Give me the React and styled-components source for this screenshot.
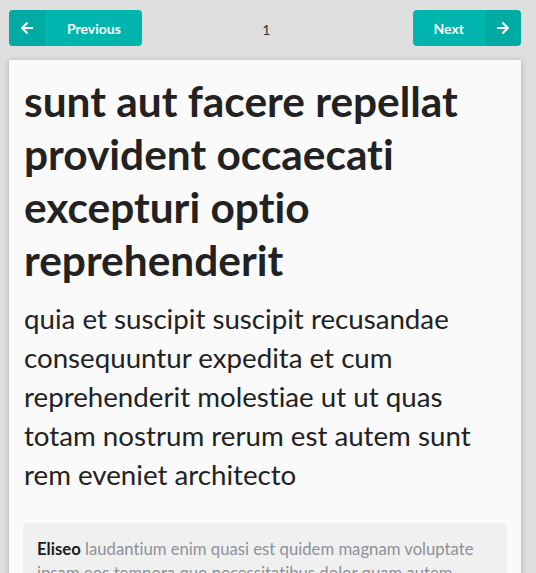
import React from 'react';
import styled, { createGlobalStyle } from 'styled-components';
import { FaArrowLeft, FaArrowRight } from 'react-icons/fa';

const GlobalStyle = createGlobalStyle`
  html, body {
    margin: 0;
    padding: 0;
    background: #dfdfdf;
    font-family: Lato, 'Helvetica Neue', Arial, sans-serif;
    font-size: 14px;
    font-variant-ligatures: none;
    color: rgba(0, 0, 0, .87);
  }
`;

const Page = styled.div`
  padding: 10px 15px 0 9px;
  height: 573px;
  overflow: hidden;
  box-sizing: border-box;
`;

const Pager = styled.nav`
  display: flex;
  align-items: center;
  justify-content: space-between;
  height: 36px;
`;

const PageNumber = styled.span`
  font-size: 14px;
  color: #333;
  padding: 2px 22px 0 0;
`;

const Button = styled.button`
  position: relative;
  display: flex;
  align-items: center;
  height: 36px;
  border: none;
  border-radius: 4px;
  background: #00b5ad;
  color: #fff;
  font-family: Lato, sans-serif;
  font-variant-ligatures: none;
  font-weight: 700;
  font-size: 14px;
  cursor: pointer;
  padding: ${p => (p.$iconRight ? '0 57px 0 21px' : '0 21px 0 58px')};
`;

const IconBox = styled.span`
  position: absolute;
  top: 0;
  bottom: 0;
  ${p => (p.$right ? 'right: 0;' : 'left: 0;')}
  width: 36px;
  display: flex;
  align-items: center;
  justify-content: center;
  background: rgba(0, 0, 0, .05);
  border-radius: ${p => (p.$right ? '0 4px 4px 0' : '4px 0 0 4px')};
  font-size: 14px;
`;

const Card = styled.article`
  margin-top: 14px;
  background: #fafafa;
  padding: 14px 14px 20px 15px;
  box-shadow: 0 1px 6px rgba(0, 0, 0, .25);
`;

const Title = styled.h1`
  margin: 0;
  font-size: 42.4px;
  line-height: 53px;
  font-weight: 700;
  color: #222;
`;

const Body = styled.p`
  margin: 13px 0 0;
  font-size: 27.7px;
  line-height: 39px;
  color: #222;
`;

const Comment = styled.div`
  margin-top: 29px;
  margin-left: -1px;
  background: #f0f0f0;
  border-radius: 4px;
  padding: 14px 14px;
  font-size: 16.7px;
  line-height: 24px;
  color: #8d9096;
`;

const Author = styled.b`
  color: #1b1c1d;
  font-weight: 700;
`;

export default function App() {
  return (
    <Page>
      <GlobalStyle />
      <Pager>
        <Button>
          <IconBox><FaArrowLeft /></IconBox>
          Previous
        </Button>
        <PageNumber>1</PageNumber>
        <Button $iconRight>
          Next
          <IconBox $right><FaArrowRight /></IconBox>
        </Button>
      </Pager>
      <Card>
        <Title>sunt aut facere repellat provident occaecati excepturi optio reprehenderit</Title>
        <Body>
          quia et suscipit suscipit recusandae consequuntur expedita et cum reprehenderit molestiae ut ut quas totam nostrum rerum est autem sunt rem eveniet architecto
        </Body>
        <Comment>
          <Author>Eliseo</Author> laudantium enim quasi est quidem magnam voluptate ipsam eos tempora quo necessitatibus dolor quam autem quasi reiciendis et nam sapiente accusantium
        </Comment>
      </Card>
    </Page>
  );
}
